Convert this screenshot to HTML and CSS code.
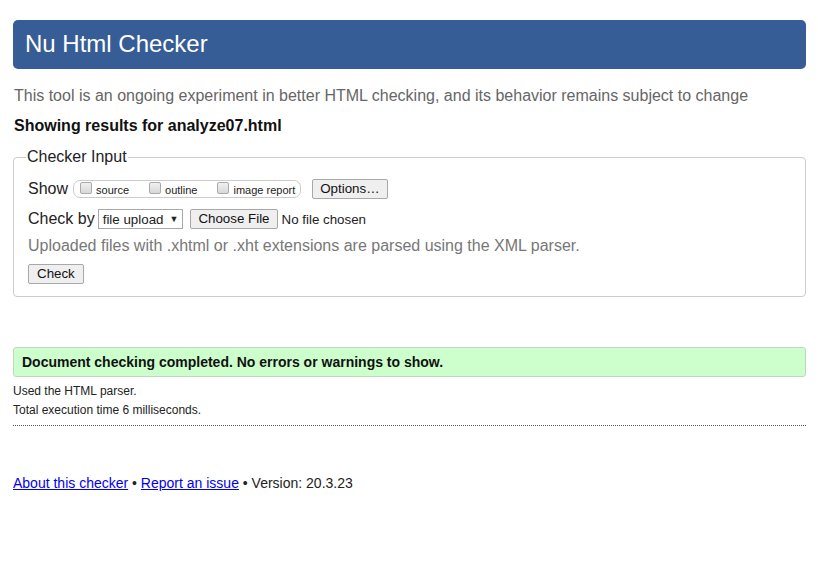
FILE: index.html
```html
<!DOCTYPE html>
<html>
<head>
<meta charset="utf-8">
<title>Nu Html Checker</title>
<link rel="stylesheet" href="styles.css">
</head>
<body>
<header class="banner"><h1>Nu Html Checker</h1></header>
<p class="intro">This tool is an ongoing experiment in better HTML checking, and its behavior remains subject to change</p>
<p class="showing">Showing results for analyze07.html</p>
<fieldset class="input">
  <legend>Checker Input</legend>
  <div class="row first">
    <span class="label">Show</span>
    <span class="showbox">
      <label class="opt"><span class="cb"></span>source</label>
      <label class="opt"><span class="cb"></span>outline</label>
      <label class="opt"><span class="cb"></span>image report</label>
    </span>
    <button class="btn opts">Options…</button>
  </div>
  <div class="row">
    <span class="label">Check by</span>
    <span class="select">file upload <span class="arrow">▼</span></span>
    <button class="btn choose">Choose File</button>
    <span class="nofile">No file chosen</span>
  </div>
  <p class="note">Uploaded files with .xhtml or .xht extensions are parsed using the XML parser.</p>
  <button class="btn check">Check</button>
</fieldset>
<div class="success">Document checking completed. No errors or warnings to show.</div>
<p class="detail">Used the HTML parser.</p>
<p class="detail">Total execution time 6 milliseconds.</p>
<hr class="sep">
<p class="footer"><a href="#">About this checker</a> • <a href="#">Report an issue</a> • Version: 20.3.23</p>
</body>
</html>
```
FILE: styles.css
```css
html, body { margin: 0; padding: 0; background: #fff; }
body {
  font-family: "Liberation Sans", Arial, sans-serif;
  color: #222;
  padding: 20px 12px 0 13px;
}
.banner {
  background: #365d95;
  border-radius: 5px;
  height: 49px;
  display: flex;
  align-items: center;
  padding: 0 12px;
}
.banner h1 {
  margin: 0;
  color: #fff;
  font-weight: normal;
  font-size: 24px;
  position: relative;
  top: -1px;
}
.intro {
  margin: 17px 0 0 1px;
  font-size: 16px;
  color: #666;
  line-height: 19px;
}
.showing {
  margin: 11px 0 0 1px;
  font-size: 16px;
  font-weight: bold;
  color: #111;
  line-height: 19px;
}
.input {
  margin: 13px 0 0 0;
  border: 1px solid #ccc;
  border-radius: 4px;
  padding: 1px 14px 12px 14px;
  min-width: 0;
}
.input legend {
  font-size: 16px;
  padding: 0 1px;
  margin-left: -2px;
  color: #222;
}
.row {
  display: flex;
  align-items: center;
  font-size: 16px;
  height: 20px;
}
.row.first { margin-top: 12px; }
.row + .row { margin-top: 10px; }
.label { margin-right: 5px; }
.showbox {
  display: inline-flex;
  align-items: center;
  border: 1px solid #ccc;
  border-radius: 7px;
  height: 16px;
  padding: 0 5px 0 6px;
  font-size: 11px;
  color: #222;
}
.opt { display: inline-flex; align-items: center; margin-right: 20px; position: relative; top: 1px; }
.opt:last-child { margin-right: 0; }
.cb {
  display: inline-block;
  width: 10px;
  height: 10px;
  border: 1px solid #aaa;
  border-radius: 2px;
  background: linear-gradient(#f0f0f0, #d8d8d8);
  margin-right: 4px;
  position: relative;
  top: -2px;
}
.btn {
  font-family: "Liberation Sans", Arial, sans-serif;
  font-size: 13.33px;
  color: #111;
  background: #efefef;
  border: 1px solid #a8a8a8;
  border-radius: 2px;
  padding: 0 7px;
  height: 20px;
  line-height: 18px;
}
.opts { margin-left: 11px; padding: 0 7px; }
.select {
  display: inline-flex;
  align-items: center;
  border: 1px solid #a8a8a8;
  height: 18px;
  font-size: 13.33px;
  padding: 0 4px 0 4px;
  margin-left: -2px;
}
.arrow { font-size: 9px; margin-left: 6px; }
.choose { margin-left: 7px; height: 20px; }
.nofile { font-size: 13.33px; margin-left: 4px; }
.note {
  margin: 7px 0 0 0;
  font-size: 16px;
  color: #777;
  line-height: 19px;
}
.check { margin-top: 9px; padding: 0 8px; }
.success {
  margin-top: 50px;
  background: #ccffcc;
  border: 1px solid #c0d8c0;
  border-radius: 3px;
  height: 30px;
  box-sizing: border-box;
  padding: 0 8px;
  display: flex;
  align-items: center;
  font-weight: bold;
  font-size: 14px;
  color: #111;
}
.detail {
  margin: 0;
  font-size: 12px;
  line-height: 19px;
  color: #222;
}
.success + .detail { margin-top: 5px; }
.sep {
  border: 0;
  border-top: 1px dotted #555;
  margin: 5px 0 0 0;
}
.footer {
  margin: 49px 0 0 0;
  font-size: 14px;
  color: #222;
}
.footer a { color: #0000ee; }
```
